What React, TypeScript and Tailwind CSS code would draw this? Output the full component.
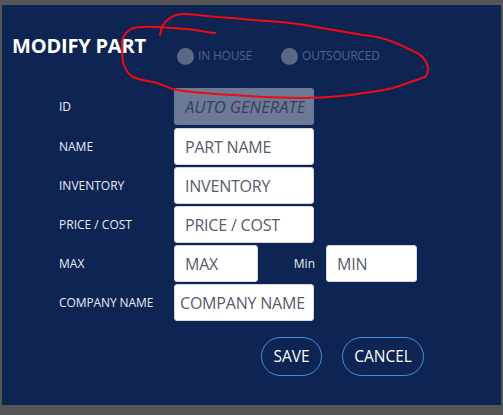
export default function App() {
  const inputBase = "h-[37px] bg-white rounded-[3px] border border-[#d5d8de] text-[16px] tracking-[-0.2px] text-[#555c6b] outline-none placeholder:text-[#555c6b]";
  const rows = [
    { label: "NAME", ph: "PART NAME" },
    { label: "INVENTORY", ph: "INVENTORY" },
    { label: "PRICE / COST", ph: "PRICE / COST" },
  ];
  return (
    <div className="relative w-[503px] h-[415px] bg-[#555555] pt-[5px] pl-[2px] pr-[2px] overflow-hidden font-['Open_Sans',sans-serif]">
      <div className="h-[400px] bg-[#0e2453] flex flex-col">
        <div className="flex items-start h-[83px]">
          <div className="ml-[10px] mt-[27px] w-[150px] text-[20px] leading-[28px] font-bold tracking-[-0.2px] text-white whitespace-nowrap">MODIFY PART</div>
          <div className="flex items-center mt-[42px] ml-[15px]">
            <span className="w-[17px] h-[17px] rounded-full bg-[#5a6786]" />
            <span className="ml-[4px] text-[12px] tracking-[-0.2px] leading-[18px] text-[#566383] w-[83px]">IN HOUSE</span>
            <span className="w-[17px] h-[17px] rounded-full bg-[#5a6786]" />
            <span className="ml-[4px] text-[12px] tracking-[-0.2px] leading-[18px] text-[#566383]">OUTSOURCED</span>
          </div>
        </div>
        <div className="flex flex-col gap-[2px] pl-[57px]">
          <div className="flex items-center mb-[1px]">
            <span className="w-[115px] text-[12px] text-[#e8edf5]">ID</span>
            <input disabled placeholder="AUTO GENERATED" className="w-[140px] h-[37px] bg-[#6c7a96] rounded-[3px] pl-[11px] pr-[9px] text-[16.5px] italic placeholder:text-[#353f5e] outline-none" />
          </div>
          {rows.map((r) => (
            <div key={r.label} className="flex items-center">
              <span className="w-[115px] text-[12px] text-[#e8edf5]">{r.label}</span>
              <input placeholder={r.ph} className={`w-[140px] pl-[10px] ${inputBase}`} />
            </div>
          ))}
          <div className="flex items-center">
            <span className="w-[115px] text-[12px] text-[#e8edf5]">MAX</span>
            <input placeholder="MAX" className={`w-[84px] pl-[10px] ${inputBase}`} />
            <span className="w-[68px] pr-[11px] text-right text-[12px] text-[#e8edf5]">Min</span>
            <input placeholder="MIN" className={`w-[91px] pl-[10px] ${inputBase}`} />
          </div>
          <div className="flex items-center">
            <span className="w-[115px] text-[12px] tracking-[-0.1px] text-[#e8edf5]">COMPANY NAME</span>
            <input placeholder="COMPANY NAME" className={`w-[140px] pl-[5px] ${inputBase}`} />
          </div>
        </div>
        <div className="flex justify-start gap-[20px] mt-[16px] pl-[259px]">
          <button className="w-[61px] h-[39px] rounded-full border border-[#3f92e0] text-[15.5px] text-white">SAVE</button>
          <button className="w-[82px] h-[39px] rounded-full border border-[#3f92e0] text-[15.5px] text-white">CANCEL</button>
        </div>
      </div>
      <svg className="absolute left-0 top-0 pointer-events-none" width="503" height="415" fill="none">
        <path
          d="M215 33 C205 32 197 30 187 29 C170 28 155 26 143 27 C135 27 131 28 128 31 C124 35 122 39 122 43 C122 50 122 56 123 62 C125 69 128 74 133 77 C140 80 148 81 157 83 C164 85 170 89 177 90 C195 93 214 94 233 95 C255 97 278 98 300 98 C317 98 334 97 350 95 C365 93 380 91 393 88 C405 84 416 80 425 77 C428 74 428 70 428 67 C426 60 423 56 417 53 C410 50 402 45 393 42 C384 38 373 36 363 35 C345 32 327 29 310 26 C296 23 282 22 267 21 C250 20 234 18 217 17 C205 16 194 14 183 14 C177 14 173 16 170 18 C166 21 163 24 162 27 C161 30 161 32 160 35"
          stroke="#f00a14"
          strokeWidth="2"
          strokeLinecap="round"
        />
      </svg>
    </div>
  );
}
